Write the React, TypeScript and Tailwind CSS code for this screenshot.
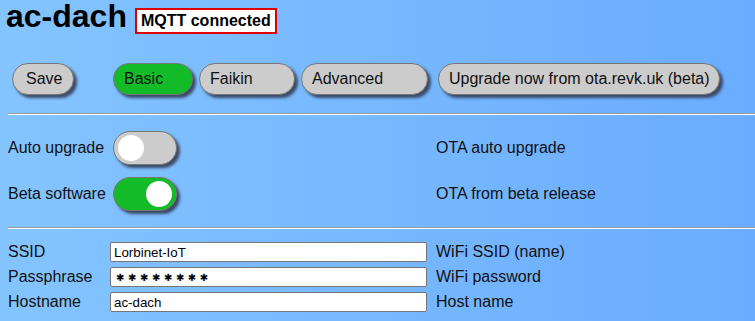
import React from 'react';

const font = { fontFamily: '"Liberation Sans", Arial, sans-serif' };

const tabs = [
  { label: 'Basic', w: 'w-[80px]', active: true },
  { label: 'Faikin', w: 'w-[96px]', active: false },
  { label: 'Advanced', w: 'w-[127px]', active: false },
];

function Toggle({ on }: { on: boolean }) {
  return (
    <div
      className={
        'ml-[3px] flex h-[34px] w-[64px] items-center rounded-full border border-[#777] px-[4px] shadow-[3px_3px_3px_#3c4a66] ' +
        (on ? 'justify-end bg-[#14bb28]' : 'justify-start bg-[#cccccc]')
      }
    >
      <div className="h-[26px] w-[26px] rounded-full bg-white" />
    </div>
  );
}

function Rule() {
  return <div className="ml-2 border-t border-b border-t-[#9a9a9a] border-b-white" />;
}

export default function App() {
  return (
    <div
      className="min-h-[321px] w-full bg-linear-to-r from-[#84c4ff] to-[#6aacff] text-[16px] text-[#111]"
      style={font}
    >
      {/* heading + status */}
      <div className="flex h-[32px] items-start pl-[6px]">
        <h1 className="text-[32px] font-bold leading-[32px] text-black">ac-dach</h1>
        <span className="ml-[8px] mt-[8px] border-2 border-[#e00000] bg-white px-[4px] text-[16px] font-bold leading-[22px] text-black">
          MQTT connected
        </span>
      </div>

      {/* buttons */}
      <div className="mt-[31px] flex items-center pl-[12px]">
        <button className="h-[32px] w-[62px] rounded-full border border-[#777] bg-[#cccccc] pl-[13px] text-left shadow-[3px_3px_3px_#3c4a66]">
          Save
        </button>
        <div className="ml-[39px] flex gap-[6px]">
          {tabs.map((t) => (
            <button
              key={t.label}
              className={
                'h-[32px] rounded-full border border-[#777] pl-[10px] text-left shadow-[3px_3px_3px_#3c4a66] ' +
                t.w +
                (t.active ? ' bg-[#14bb28]' : ' bg-[#cccccc]')
              }
            >
              {t.label}
            </button>
          ))}
        </div>
        <button className="ml-[10px] h-[32px] w-[282px] rounded-full border border-[#777] bg-[#cccccc] pl-[10px] text-left shadow-[3px_3px_3px_#3c4a66]">
          Upgrade now from ota.revk.uk (beta)
        </button>
      </div>

      <div className="mt-[18px]">
        <Rule />
      </div>

      {/* switches */}
      <div className="mt-[16px] grid grid-cols-[102px_326px_1fr] items-center gap-y-[12px] pl-[8px]">
        <span>Auto upgrade</span>
        <Toggle on={false} />
        <span>OTA auto upgrade</span>
        <span>Beta software</span>
        <Toggle on={true} />
        <span>OTA from beta release</span>
      </div>

      <div className="mt-[16px]">
        <Rule />
      </div>

      {/* settings */}
      <div className="mt-[13px] grid grid-cols-[102px_326px_1fr] items-center gap-y-[5px] pl-[8px]">
        <span className="leading-[20px]">SSID</span>
        <input
          defaultValue="Lorbinet-IoT"
          className="h-[20px] w-[317px] rounded-[2px] border border-[#767676] bg-white px-[3px] text-[13.33px] text-black outline-none"
        />
        <span className="leading-[20px]">WiFi SSID (name)</span>

        <span className="leading-[20px]">Passphrase</span>
        <div className="flex h-[20px] w-[317px] items-center rounded-[2px] border border-[#767676] bg-white pl-[5px] text-[10px] tracking-[3.6px] text-black" style={{ fontFamily: '"DejaVu Sans", sans-serif' }}>
          ✱✱✱✱✱✱✱✱
        </div>
        <span className="leading-[20px]">WiFi password</span>

        <span className="leading-[20px]">Hostname</span>
        <input
          defaultValue="ac-dach"
          className="h-[20px] w-[317px] rounded-[2px] border border-[#767676] bg-white px-[3px] text-[13.33px] text-black outline-none"
        />
        <span className="leading-[20px]">Host name</span>
      </div>
    </div>
  );
}
